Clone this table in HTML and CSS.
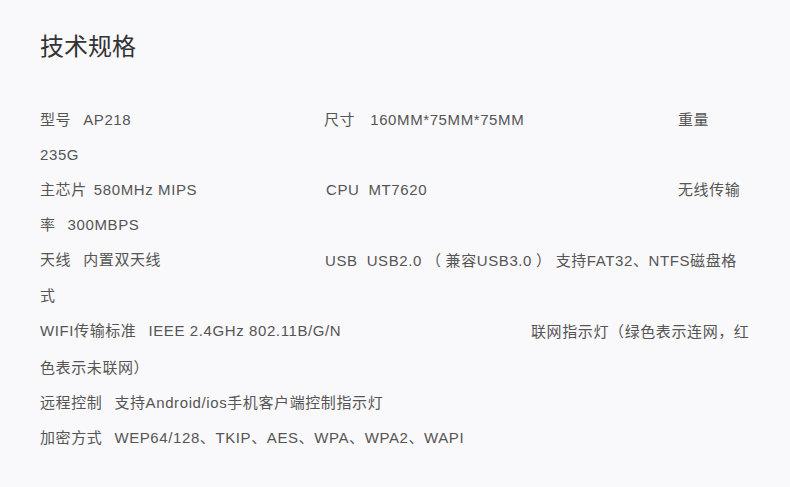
FILE: index.html
```html
<!DOCTYPE html>
<html lang="zh-CN">
<head>
<meta charset="utf-8">
<title>技术规格</title>
<link rel="stylesheet" href="styles.css">
</head>
<body>
<div class="page">
  <h2 class="title">技术规格</h2>
  <div class="specs">
    <p class="row"><span class="item w-284"><span class="label">型号</span>AP218</span><span class="item w-354"><span class="label wide">尺寸</span>160MM*75MM*75MM</span><span class="label">重量</span>235G</p>
    <p class="row"><span class="item w-286"><span class="label short">主芯片</span>580MHz MIPS</span><span class="item w-352"><span class="label latin">CPU</span>MT7620</span><span class="label">无线传输率</span>300MBPS</p>
    <p class="row"><span class="item w-285"><span class="label">天线</span>内置双天线</span><span class="label latin">USB</span>USB2.0<span class="paren spaced">（</span>兼容USB3.0<span class="paren spaced">）</span>支持FAT32、NTFS磁盘格式</p>
    <p class="row"><span class="item w-491"><span class="label">WIFI传输标准</span>IEEE 2.4GHz 802.11B/G/N</span>联网指示灯<span class="paren">（</span>绿色表示连网，红色表示未联网<span class="paren">）</span></p>
    <p class="row"><span class="label">远程控制</span>支持Android/ios手机客户端控制指示灯</p>
    <p class="row"><span class="label">加密方式</span>WEP64/128、TKIP、AES、WPA、WPA2、WAPI</p>
  </div>
</div>
</body>
</html>
```
FILE: styles.css
```css
html, body {
  margin: 0;
  padding: 0;
  background: #f9f9fb;
}
body {
  font-family: "Liberation Sans", "Noto Sans CJK SC", sans-serif;
  color: #555;
}
.page {
  padding: 30px 0 0 40px;
  width: 710px;
}
.title {
  margin: 0;
  font-family: "Noto Sans CJK SC", sans-serif;
  font-size: 24px;
  line-height: 30px;
  font-weight: normal;
  color: #333;
}
.specs {
  margin-top: 42px;
  font-size: 15px;
  line-height: 35px;
  letter-spacing: 0.6px;
}
.row {
  margin: 0;
}
.item {
  display: inline-block;
  vertical-align: top;
}
.w-284 { width: 284px; }
.w-285 { width: 285px; }
.w-286 { width: 286px; }
.w-352 { width: 352px; }
.w-354 { width: 354px; }
.w-491 { width: 491px; }
.label {
  margin-right: 12px;
}
.label.wide {
  margin-right: 15px;
}
.label.short {
  margin-right: 7px;
}
.label.latin {
  margin-right: 9px;
}
.paren {
  font-family: "Noto Sans CJK TC", "Noto Sans CJK SC", sans-serif;
}
.paren.spaced {
  margin: 0 4px;
}
```
